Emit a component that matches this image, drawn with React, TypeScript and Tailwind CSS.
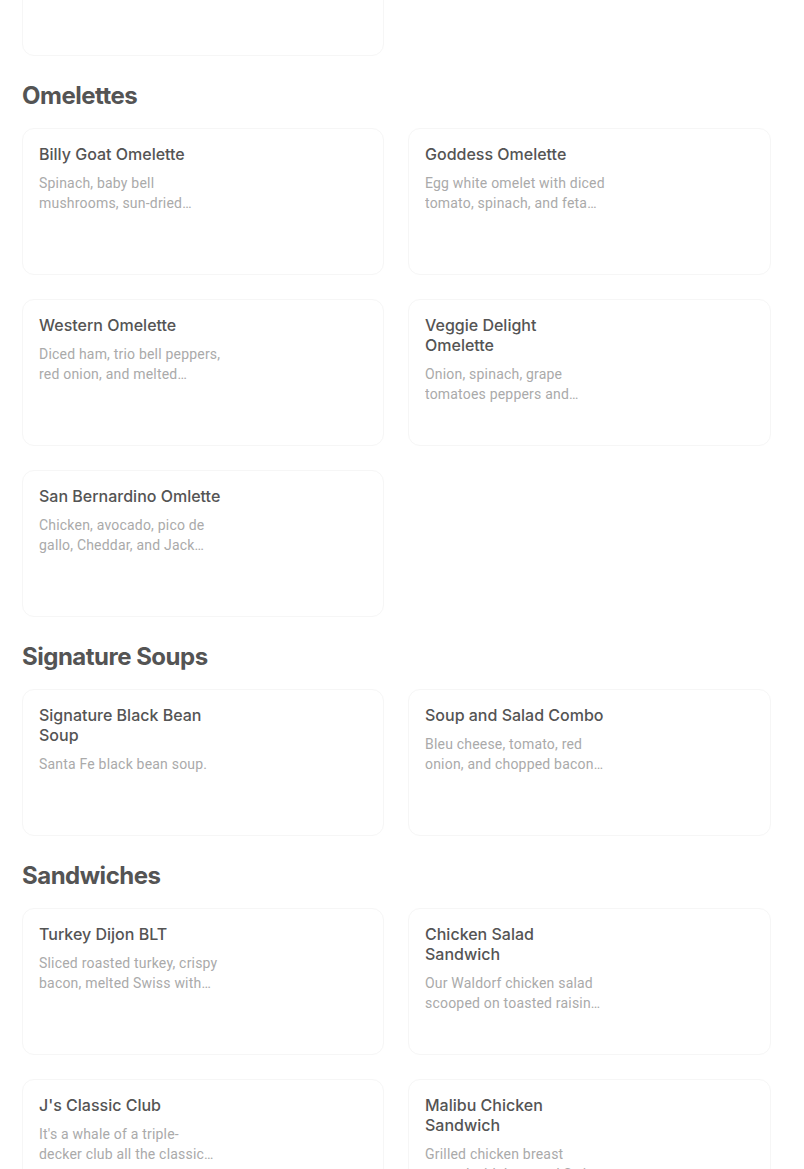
import React from "react";

type Item = { title: string; desc: string };

const sections: { name: string; items: Item[] }[] = [
  {
    name: "Omelettes",
    items: [
      { title: "Billy Goat Omelette", desc: "Spinach, baby bell mushrooms, sun-dried tomatoes, and goat cheese." },
      { title: "Goddess Omelette", desc: "Egg white omelet with diced tomato, spinach, and feta cheese." },
      { title: "Western Omelette", desc: "Diced ham, trio bell peppers, red onion, and melted Cheddar cheese." },
      { title: "Veggie Delight Omelette", desc: "Onion, spinach, grape tomatoes peppers and mushrooms." },
      { title: "San Bernardino Omlette", desc: "Chicken, avocado, pico de gallo, Cheddar, and Jack cheese." },
    ],
  },
  {
    name: "Signature Soups",
    items: [
      { title: "Signature Black Bean Soup", desc: "Santa Fe black bean soup." },
      { title: "Soup and Salad Combo", desc: "Bleu cheese, tomato, red onion, and chopped bacon with dressing." },
    ],
  },
  {
    name: "Sandwiches",
    items: [
      { title: "Turkey Dijon BLT", desc: "Sliced roasted turkey, crispy bacon, melted Swiss with lettuce." },
      { title: "Chicken Salad Sandwich", desc: "Our Waldorf chicken salad scooped on toasted raisin bread." },
      { title: "J's Classic Club", desc: "It's a whale of a triple-\ndecker club all the classic fixings." },
      { title: "Malibu Chicken Sandwich", desc: "Grilled chicken breast topped with ham and Swiss cheese." },
    ],
  },
];

function Card({ item }: { item?: Item }) {
  return (
    <div className="h-[147px] rounded-[12px] border border-[#f6f6f6] bg-white px-[16px] pt-[15px]">
      {item && (
        <div className="w-[184px]">
          <div className="text-[16px] leading-[20px] font-medium text-[#545454] [font-family:Inter,'Noto_Sans',sans-serif]">
            {item.title}
          </div>
          <div className="mt-[9px] line-clamp-2 whitespace-pre-line text-[14px] leading-[20px] tracking-[0.2px] text-[#aaaaaa] [font-family:Roboto,'Noto_Sans',sans-serif]">
            {item.desc}
          </div>
        </div>
      )}
    </div>
  );
}

export default function App() {
  return (
    <div className="min-h-[1169px] w-[804px] overflow-hidden bg-white">
      <div className="ml-[22px] w-[749px] -mt-[91px]">
        <div className="grid grid-cols-[362px_363px] gap-x-[24px] gap-y-[24px]">
          <Card />
          <div />
        </div>
        {sections.map((s) => (
          <div key={s.name}>
            <h2 className="mt-[24px] mb-[16px] text-[24px] leading-[32px] font-bold tracking-[-0.5px] text-[#545454] [font-family:Inter,'Noto_Sans',sans-serif]">
              {s.name}
            </h2>
            <div className="grid grid-cols-[362px_363px] gap-x-[24px] gap-y-[24px]">
              {s.items.map((it) => (
                <Card key={it.title} item={it} />
              ))}
            </div>
          </div>
        ))}
      </div>
    </div>
  );
}
